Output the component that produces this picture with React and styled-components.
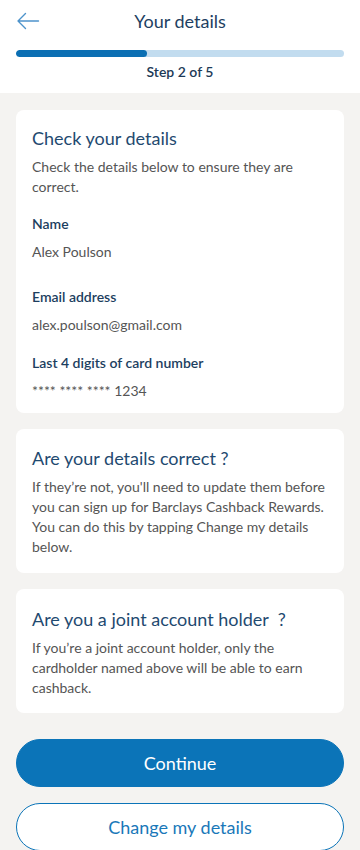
import React from "react";
import styled, { createGlobalStyle } from "styled-components";

const GlobalStyle = createGlobalStyle`
  * { box-sizing: border-box; }
  body {
    margin: 0;
    background: #f4f3f1;
    font-family: "Lato", "Open Sans", sans-serif;
    -webkit-font-smoothing: antialiased;
  }
`;

const fields = [
  { label: "Name", value: "Alex Poulson", gap: 17 },
  { label: "Email address", value: "alex.poulson@gmail.com", gap: 25 },
  { label: "Last 4 digits of card number", value: "**** **** **** 1234", gap: 18 },
];

function BackArrow() {
  return (
    <svg width="24" height="18" viewBox="0 0 24 18" fill="none">
      <path
        d="M22.5 9H2M9.5 1.5L2 9l7.5 7.5"
        stroke="#4d93cb"
        strokeWidth="1.4"
        strokeLinecap="round"
        strokeLinejoin="round"
      />
    </svg>
  );
}

function App() {
  return (
    <Page>
      <GlobalStyle />
      <Header>
        <TopRow>
          <BackButton aria-label="Back">
            <BackArrow />
          </BackButton>
          <Title>Your details</Title>
        </TopRow>
        <Progress>
          <ProgressFill style={{ width: `${(2 / 5) * 100}%` }} />
        </Progress>
        <StepText>Step 2 of 5</StepText>
      </Header>

      <Main>
        <Card $pt={16} $pb={12}>
          <CardTitle>Check your details</CardTitle>
          <CardText>Check the details below to ensure they are correct.</CardText>
          {fields.map((f) => (
            <Field key={f.label} $gap={f.gap}>
              <Label>{f.label}</Label>
              <Value>{f.value}</Value>
            </Field>
          ))}
        </Card>

        <Card $pt={17} $pb={16}>
          <CardTitle>Are your details correct ?</CardTitle>
          <CardText>
            If they’re not, you'll need to update them before you can sign up
            for Barclays Cashback Rewards. You can do this by tapping Change my
            details below.
          </CardText>
        </Card>

        <Card $pt={18} $pb={15}>
          <CardTitle>Are you a joint account holder&nbsp; ?</CardTitle>
          <CardText>
            If you’re a joint account holder, only the cardholder named above
            will be able to earn cashback.
          </CardText>
        </Card>

        <Actions>
          <Button $primary>Continue</Button>
          <Button>Change my details</Button>
        </Actions>
      </Main>
    </Page>
  );
}

const Page = styled.div`
  min-height: 100vh;
  background: #f4f3f1;
`;

const Header = styled.header`
  background: #ffffff;
  padding: 0 16px 12px;
`;

const TopRow = styled.div`
  position: relative;
  height: 42px;
  display: flex;
  align-items: center;
  justify-content: center;
`;

const BackButton = styled.button`
  position: absolute;
  left: 0;
  top: 12px;
  padding: 0;
  border: none;
  background: none;
  display: flex;
`;

const Title = styled.h1`
  margin: 0;
  font-size: 18px;
  font-weight: 400;
  color: #1e3f62;
`;

const Progress = styled.div`
  margin-top: 8px;
  height: 7px;
  border-radius: 4px;
  background: #c2dcef;
  overflow: hidden;
`;

const ProgressFill = styled.div`
  height: 100%;
  border-radius: 4px;
  background: #0b6fb3;
`;

const StepText = styled.div`
  margin-top: 6px;
  text-align: center;
  font-size: 14px;
  font-weight: 600;
  line-height: 18px;
  color: #1d3a57;
`;

const Main = styled.main`
  padding: 17px 16px 0;
  display: flex;
  flex-direction: column;
  gap: 16px;
`;

const Card = styled.section`
  background: #ffffff;
  border-radius: 8px;
  padding: ${(p) => p.$pt}px 16px ${(p) => p.$pb}px;
`;

const CardTitle = styled.h2`
  margin: 0 0 7px;
  font-size: 18px;
  line-height: 24px;
  font-weight: 400;
  color: #1f4a70;
`;

const CardText = styled.p`
  margin: 0;
  font-size: 14px;
  line-height: 20px;
  color: #555555;
`;

const Field = styled.div`
  margin-top: ${(p) => p.$gap}px;
  display: flex;
  flex-direction: column;
  gap: 8px;
`;

const Label = styled.div`
  font-size: 14px;
  line-height: 20px;
  font-weight: 600;
  color: #1c3e60;
`;

const Value = styled.div`
  font-size: 14px;
  line-height: 20px;
  color: #555555;
`;

const Actions = styled.div`
  margin-top: 10px;
  display: flex;
  flex-direction: column;
  gap: 16px;
`;

const Button = styled.button`
  height: 48px;
  border-radius: 24px;
  font-family: inherit;
  font-size: 18px;
  font-weight: 400;
  border: 1px solid #0b74b8;
  background: ${(p) => (p.$primary ? "#0b74b8" : "#ffffff")};
  color: ${(p) => (p.$primary ? "#ffffff" : "#1a78b9")};
`;

export default App;
